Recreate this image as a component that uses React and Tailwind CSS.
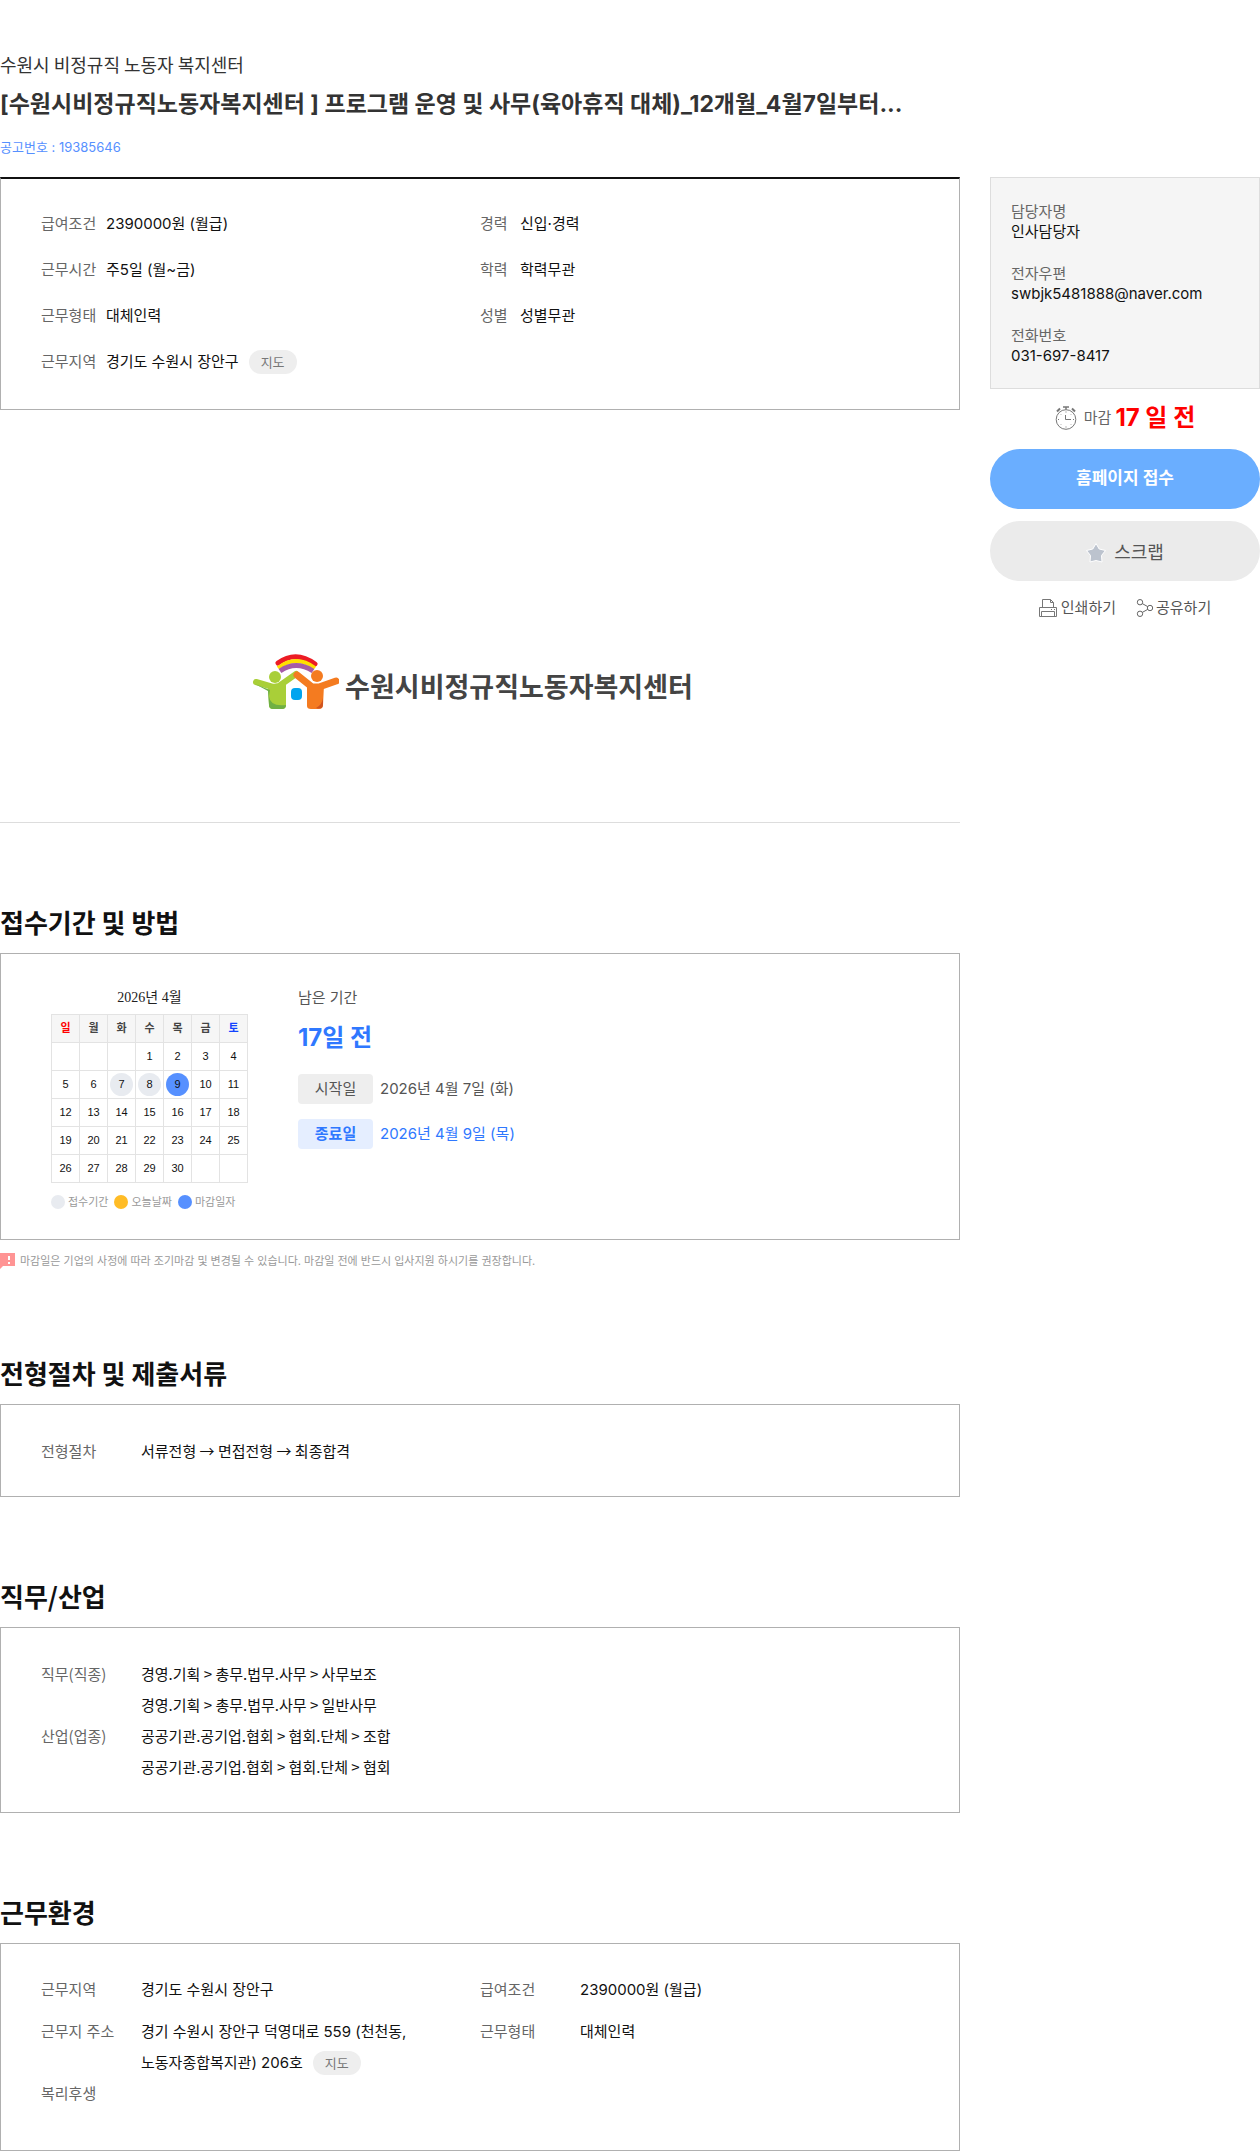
import clsx from 'clsx'

const WEEKDAYS = ['일', '월', '화', '수', '목', '금', '토']

const WEEKS = [
    [null, null, null, 1, 2, 3, 4],
    [5, 6, 7, 8, 9, 10, 11],
    [12, 13, 14, 15, 16, 17, 18],
    [19, 20, 21, 22, 23, 24, 25],
    [26, 27, 28, 29, 30, null, null],
]

const OPEN_DAYS = [7, 8]
const DEADLINE_DAY = 9

const LEGEND = [
    { label: '접수기간', color: 'bg-[#e8ebf0]' },
    { label: '오늘날짜', color: 'bg-[#ffbc26]' },
    { label: '마감일자', color: 'bg-[#5690ff]' },
]

const CONTACTS = [
    { label: '담당자명', value: '인사담당자' },
    { label: '전자우편', value: 'swbjk5481888@naver.com' },
    { label: '전화번호', value: '031-697-8417' },
]

function CenterLogo() {
    return (
        <svg viewBox="0 0 86 56" className="w-[86px] h-14 shrink-0" fill="none" aria-hidden="true">
            {/* Rainbow */}
            <path d="M25 9Q43 -4 62 10" stroke="#ec1c24" strokeWidth="5" strokeLinecap="round" />
            <path d="M25 14Q43 0 62 14" stroke="#ffe000" strokeWidth="4" />
            <path d="M27 17Q43 6 60 17" stroke="#a65ba6" strokeWidth="5" />
            {/* Left figure */}
            <circle cx="22" cy="23" r="6" fill="#a9cf38" />
            <path d="M3 28L20 33L26 32L43 20" stroke="#a9cf38" strokeWidth="6" strokeLinecap="round" strokeLinejoin="round" />
            <path d="M15 32L33 29V51Q33 55 29 55H20Q16 55 16 51Z" fill="#a9cf38" />
            <path d="M2 30L17 36L16 42Q17 53 33 51Q33 55 29 55H20Q16 55 16 51L15 37Z" fill="#6fb044" />
            {/* Right figure */}
            <path d="M44 21L59 33L66 33L83 27" stroke="#f47b20" strokeWidth="7" strokeLinecap="round" strokeLinejoin="round" />
            <path d="M54 31H71L70 51Q70 55 66 55H58Q54 55 54 52Z" fill="#f47b20" />
            <path d="M70 44Q69 51 63 54Q70 56 70 50Z" fill="#cf5320" />
            <circle cx="64" cy="22" r="6" fill="#f47b20" />
            {/* Window */}
            <rect x="38" y="34" width="11" height="12" rx="4" fill="#00a4ef" />
        </svg>
    )
}

function ClockIcon() {
    return (
        <svg viewBox="0 0 22 24" className="w-[22px] h-6" fill="none" stroke="#777" aria-hidden="true">
            <circle cx="11" cy="13.5" r="9.8" />
            <path d="M10.5 9V13.5H16" />
            <path d="M8 1H14M11 1V3.5" strokeWidth="1.5" />
            <path d="M2 5.5L5 2.5M20 5.5L17 2.5" strokeWidth="2" />
            <path d="M11 5.5V6.5M11 20.5V21.5M3 13.5H4M18 13.5H19M5.5 8L6 8.5M16.5 8L16 8.5M5.5 19L6 18.5M16.5 19L16 18.5" />
        </svg>
    )
}

function StarIcon() {
    return (
        <svg viewBox="0 0 20 20" className="w-5 h-5" fill="#bcc3ce" stroke="#fff" strokeLinejoin="round" aria-hidden="true">
            <path d="M10 .5L13.2 6L19.5 7.5L15.5 12.5L16 19L10 17.5L4 19L4.5 12.5L.5 7.5L6.8 6Z" />
        </svg>
    )
}

function PrintIcon() {
    return (
        <svg viewBox="0 0 18 18" className="w-[18px] h-[18px]" fill="none" stroke="#777" aria-hidden="true">
            <path d="M3.5 8.5V.5H11.5L14.5 3.5V8.5M11.5 .5V3.5H14.5M.5 17.5V8.5H17.5V17.5Z" />
            <path d="M2.5 17.5V12.5H15.5V17.5M12 10.5H13M15 10.5H16" />
        </svg>
    )
}

function ShareIcon() {
    return (
        <svg viewBox="0 0 18 18" className="w-[18px] h-[18px]" fill="none" stroke="#666" aria-hidden="true">
            <circle cx="4" cy="3.2" r="2.7" />
            <circle cx="14" cy="9" r="2.7" />
            <circle cx="4" cy="14.8" r="2.7" />
            <path d="M6.3 4.6L11.7 7.6M6.3 13.4L11.7 10.4" />
        </svg>
    )
}

function NoticeIcon() {
    return (
        <svg viewBox="0 0 15 16" className="w-[15px] h-4 shrink-0" aria-hidden="true">
            <path d="M0 0H15V13H3L0 16Z" fill="#ff9494" />
            <path d="M8 3H10V7H8ZM8 9H10V11H8Z" fill="#fff" />
        </svg>
    )
}

function MapButton() {
    return (
        <button type="button" className="h-6 px-3 ml-[10px] rounded-full bg-[#eee] text-[13px] leading-6 text-[#777]">
            지도
        </button>
    )
}

function SummaryRow({ label, labelWidth, children }) {
    return (
        <div className="flex items-center h-[46px]">
            <dt className={clsx('text-[#666]', labelWidth)}>{label}</dt>
            <dd className="flex items-center">{children}</dd>
        </div>
    )
}

function DetailRow({ label, children, className }) {
    return (
        <div className={clsx('flex min-h-[31px] leading-[31px]', className)}>
            <dt className="w-[100px] shrink-0 text-[#666]">{label}</dt>
            <dd>{children}</dd>
        </div>
    )
}

function Section({ title, children, note, className }) {
    return (
        <section className="pt-20">
            <h2 className="mb-3 font-['Noto_Sans_CJK_KR',sans-serif] text-[26px] leading-[38px] font-bold">{title}</h2>
            <div className={clsx('border border-[#b0b0b0]', className)}>{children}</div>
            {note}
        </section>
    )
}

function Calendar() {
    return (
        <div>
            <table className="border-collapse table-fixed w-[197px] text-center font-['Liberation_Sans','Noto_Sans_CJK_KR',sans-serif] text-[11px]">
                <caption className="font-['Liberation_Serif','Noto_Sans_CJK_KR',serif] text-sm leading-5 pb-[6px] text-[#222]">
                    2026년 4월
                </caption>
                <thead>
                    <tr>
                        {WEEKDAYS.map((day, i) => (
                            <th
                                key={day}
                                scope="col"
                                className={clsx(
                                    'h-7 p-0 border border-[#e3e3e3] bg-[#f6f6f6] font-bold',
                                    i === 0 ? 'text-[#f00]' : i === 6 ? 'text-[#1243ff]' : 'text-[#444]'
                                )}
                            >
                                {day}
                            </th>
                        ))}
                    </tr>
                </thead>
                <tbody>
                    {WEEKS.map((week, w) => (
                        <tr key={w}>
                            {week.map((day, i) => (
                                <td key={i} className="h-7 p-0 border border-[#e3e3e3]">
                                    <span
                                        className={clsx(
                                            'flex items-center justify-center mx-auto w-[23px] h-[23px] rounded-full',
                                            OPEN_DAYS.includes(day) && 'bg-[#e8ebf0]',
                                            day === DEADLINE_DAY && 'bg-[#5690ff]'
                                        )}
                                    >
                                        {day}
                                    </span>
                                </td>
                            ))}
                        </tr>
                    ))}
                </tbody>
            </table>
            <ul className="flex gap-[6px] mt-[10px] text-[11px] leading-[18px] text-[#999]">
                {LEGEND.map(item => (
                    <li key={item.label} className="flex items-center gap-[3px]">
                        <span className={clsx('w-[14px] h-[14px] rounded-full', item.color)} />
                        {item.label}
                    </li>
                ))}
            </ul>
        </div>
    )
}

export default function App() {
    return (
        <div className="bg-white text-[#111] text-[15px] font-['Inter','Noto_Sans_CJK_KR',sans-serif]">
            <header className="pt-[50px] text-[#333]">
                <p className="font-['Noto_Sans_CJK_KR',sans-serif] text-lg leading-7">수원시 비정규직 노동자 복지센터</p>
                <h1 className="mt-[6px] text-[23px] leading-10 font-bold">
                    [수원시비정규직노동자복지센터 ] 프로그램 운영 및 사무(육아휴직 대체)_12개월_4월7일부터...
                </h1>
                <p className="mt-[13px] text-[13px] leading-5 text-[#5690ff]">공고번호 : 19385646</p>
            </header>

            <div className="flex items-start gap-[30px] mt-5">
                <main className="flex-1 min-w-0">
                    <dl className="grid grid-cols-2 pt-[22px] pb-6 px-10 border border-[#b0b0b0] border-t-2 border-t-[#111]">
                        <div>
                            <SummaryRow label="급여조건" labelWidth="w-[65px]">2390000원 (월급)</SummaryRow>
                            <SummaryRow label="근무시간" labelWidth="w-[65px]">주5일 (월~금)</SummaryRow>
                            <SummaryRow label="근무형태" labelWidth="w-[65px]">대체인력</SummaryRow>
                            <SummaryRow label="근무지역" labelWidth="w-[65px]">경기도 수원시 장안구 <MapButton /></SummaryRow>
                        </div>
                        <div>
                            <SummaryRow label="경력" labelWidth="w-10">신입·경력</SummaryRow>
                            <SummaryRow label="학력" labelWidth="w-10">학력무관</SummaryRow>
                            <SummaryRow label="성별" labelWidth="w-10">성별무관</SummaryRow>
                        </div>
                    </dl>

                    <div className="flex justify-center items-center gap-[6px] pt-[244px] pb-28 pr-[14px] border-b border-[#ddd]">
                        <CenterLogo />
                        <span className="pt-3 text-[27px] leading-10 font-bold text-[#444]">수원시비정규직노동자복지센터</span>
                    </div>

                    <Section
                        title="접수기간 및 방법"
                        className="flex gap-[50px] pt-[34px] pb-[28px] pl-[50px]"
                        note={
                            <p className="flex items-center gap-[5px] pt-3 pb-1 text-[11px] leading-[18px] text-[#999]">
                                <NoticeIcon />
                                마감일은 기업의 사정에 따라 조기마감 및 변경될 수 있습니다. 마감일 전에 반드시 입사지원 하시기를 권장합니다.
                            </p>
                        }
                    >
                        <Calendar />
                        <div className="text-[#555]">
                            <p className="leading-5">남은 기간</p>
                            <p className="mt-[10px] text-2xl leading-10 font-bold text-[#2f78ff]">17일 전</p>
                            <dl>
                                <div className="flex items-center gap-[7px] mt-4">
                                    <dt className="w-[75px] rounded bg-[#eee] text-center leading-[30px]">시작일</dt>
                                    <dd>2026년 4월 7일 (화)</dd>
                                </div>
                                <div className="flex items-center gap-[7px] mt-[15px] text-[#2f78ff]">
                                    <dt className="w-[75px] rounded bg-[#e5eeff] text-center leading-[30px] font-bold">종료일</dt>
                                    <dd>2026년 4월 9일 (목)</dd>
                                </div>
                            </dl>
                        </div>
                    </Section>

                    <Section title="전형절차 및 제출서류" className="px-10 py-[30px]">
                        <dl className="font-['Noto_Sans_CJK_KR',sans-serif]">
                            <DetailRow label="전형절차">서류전형 → 면접전형 → 최종합격</DetailRow>
                        </dl>
                    </Section>

                    <Section title="직무/산업" className="px-10 py-[30px]">
                        <dl className="font-['Noto_Sans_CJK_KR',sans-serif]">
                            <DetailRow label="직무(직종)">
                                <p>경영.기획 &gt; 총무.법무.사무 &gt; 사무보조</p>
                                <p>경영.기획 &gt; 총무.법무.사무 &gt; 일반사무</p>
                            </DetailRow>
                            <DetailRow label="산업(업종)">
                                <p>공공기관.공기업.협회 &gt; 협회.단체 &gt; 조합</p>
                                <p>공공기관.공기업.협회 &gt; 협회.단체 &gt; 협회</p>
                            </DetailRow>
                        </dl>
                    </Section>

                    <Section title="근무환경" className="px-10 py-[30px]">
                        <div className="grid grid-cols-2">
                            <dl>
                                <DetailRow label="근무지역">경기도 수원시 장안구</DetailRow>
                                <DetailRow label="근무지 주소" className="mt-[11px]">
                                    경기 수원시 장안구 덕영대로 559 (천천동,
                                    <span className="flex items-center">노동자종합복지관) 206호 <MapButton /></span>
                                </DetailRow>
                                <DetailRow label="복리후생" className="mb-[11px]" />
                            </dl>
                            <dl>
                                <DetailRow label="급여조건">2390000원 (월급)</DetailRow>
                                <DetailRow label="근무형태" className="mt-[11px]">대체인력</DetailRow>
                            </dl>
                        </div>
                    </Section>
                </main>

                <aside className="w-[270px] shrink-0">
                    <dl className="flex flex-col gap-[22px] pt-6 pb-[22px] px-5 border border-[#ddd] bg-[#f5f5f5] leading-5">
                        {CONTACTS.map(item => (
                            <div key={item.label}>
                                <dt className="text-[#666]">{item.label}</dt>
                                <dd>{item.value}</dd>
                            </div>
                        ))}
                    </dl>
                    <p className="flex items-center justify-center h-[60px] pb-[2px] text-[#666]">
                        <ClockIcon />
                        <span className="ml-[7px] mr-1">마감</span>
                        <strong className="text-2xl font-bold text-[#f00]">17 일 전</strong>
                    </p>
                    <button type="button" className="block w-full h-[60px] rounded-full bg-[#6aaeff] text-[17px] font-bold text-white">
                        홈페이지 접수
                    </button>
                    <button type="button" className="flex items-center justify-center gap-2 w-full h-[60px] pt-1 mt-3 rounded-full bg-[#ebebeb] text-lg text-[#555]">
                        <StarIcon />
                        스크랩
                    </button>
                    <div className="flex justify-center gap-5 mt-4 leading-[22px] text-[#555]">
                        <button type="button" className="flex items-center gap-1">
                            <PrintIcon />
                            인쇄하기
                        </button>
                        <button type="button" className="flex items-center gap-[2px]">
                            <ShareIcon />
                            공유하기
                        </button>
                    </div>
                </aside>
            </div>
        </div>
    )
}
